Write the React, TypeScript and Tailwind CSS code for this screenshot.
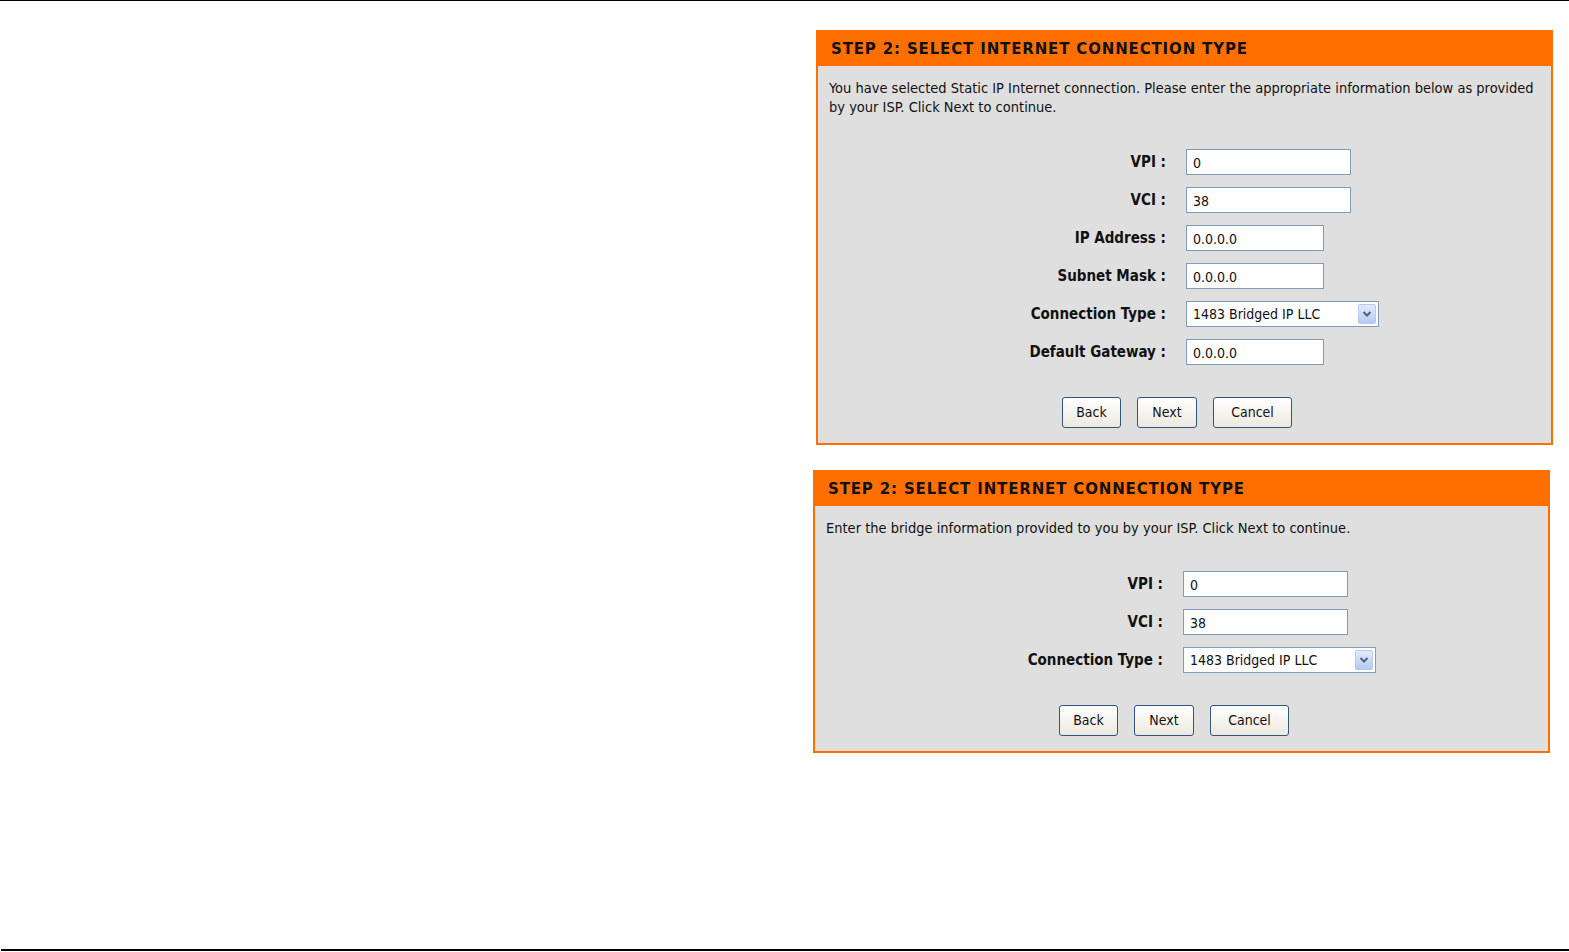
import React from "react";

type Field = { label: string; value: string; kind: "wide" | "narrow" | "select" };

const staticFields: Field[] = [
  { label: "VPI :", value: "0", kind: "wide" },
  { label: "VCI :", value: "38", kind: "wide" },
  { label: "IP Address :", value: "0.0.0.0", kind: "narrow" },
  { label: "Subnet Mask :", value: "0.0.0.0", kind: "narrow" },
  { label: "Connection Type :", value: "1483 Bridged IP LLC", kind: "select" },
  { label: "Default Gateway :", value: "0.0.0.0", kind: "narrow" },
];

const bridgeFields: Field[] = [
  { label: "VPI :", value: "0", kind: "wide" },
  { label: "VCI :", value: "38", kind: "wide" },
  { label: "Connection Type :", value: "1483 Bridged IP LLC", kind: "select" },
];

const bodyFont = { fontFamily: '"DejaVu Sans Condensed", "DejaVu Sans", Tahoma, sans-serif' };

const FieldInput: React.FC<{ field: Field }> = ({ field }) => {
  if (field.kind === "select") {
    return (
      <div className="flex h-[26px] w-[193px] items-center justify-between border border-[#7f9db9] bg-white pl-[6px] pr-[2px] text-[14px] text-[#111]">
        <span>{field.value}</span>
        <div className="flex h-[20px] w-[18px] items-center justify-center rounded-[2px] border border-[#b8c9ee] bg-gradient-to-b from-[#e2ebfd] to-[#b7c9f3]">
          <svg width="10" height="8" viewBox="0 0 10 8">
            <path d="M1.5 2 L5 5.5 L8.5 2" fill="none" stroke="#4d6185" strokeWidth="2" />
          </svg>
        </div>
      </div>
    );
  }
  return (
    <div
      className={`flex h-[26px] items-center border border-[#7f9db9] bg-white pl-[6px] pt-[2px] text-[14px] text-[#111] ${
        field.kind === "wide" ? "w-[165px]" : "w-[138px]"
      }`}
    >
      {field.value}
    </div>
  );
};

const Btn: React.FC<{ label: string; w: string }> = ({ label, w }) => (
  <button
    type="button"
    className={`${w} h-[31px] rounded-[3px] border border-[#2f5680] bg-gradient-to-b from-[#ffffff] to-[#ece9de] text-[14px] text-[#111]`}
    style={bodyFont}
  >
    {label}
  </button>
);

const Panel: React.FC<{
  offset: string;
  text: React.ReactNode;
  fields: Field[];
  formTop: string;
  btnTop: string;
}> = ({ offset, text, fields, formTop, btnTop }) => (
  <div className={`${offset} w-[737px] border-2 border-[#ff6f00] bg-[#dfdfdf]`}>
    <div
      className="flex h-[34px] items-center bg-[#ff6f00] pl-[13px] text-[15px] font-bold tracking-[0.85px] text-[#111]"
      style={{ fontFamily: '"DejaVu Sans", Verdana, sans-serif' }}
    >
      STEP 2: SELECT INTERNET CONNECTION TYPE
    </div>
    <div className="px-[11px] pt-[13px] pb-[15px]" style={bodyFont}>
      <p className="text-[14.5px] leading-[19px] text-[#111]">{text}</p>
      <div className={`${formTop} grid grid-cols-[337px_1fr] gap-x-[20px] gap-y-[12px]`}>
        {fields.map((f) => (
          <React.Fragment key={f.label}>
            <div className="flex h-[26px] items-center justify-end text-[15px] font-bold text-[#111]">
              {f.label}
            </div>
            <FieldInput field={f} />
          </React.Fragment>
        ))}
      </div>
      <div className={`${btnTop} flex gap-[16px] pl-[233px]`}>
        <Btn label="Back" w="w-[59px]" />
        <Btn label="Next" w="w-[60px]" />
        <Btn label="Cancel" w="w-[79px]" />
      </div>
    </div>
  </div>
);

export default function App() {
  return (
    <div className="flex h-[952px] w-[1569px] flex-col overflow-hidden border-t border-black bg-white">
      <div className="flex flex-1 flex-col pt-[29px]">
        <Panel
          offset="ml-[816px]"
          text={
            <>
              You have selected Static IP Internet connection. Please enter the appropriate information below as provided
              <br />
              by your ISP. Click Next to continue.
            </>
          }
          fields={staticFields}
          formTop="mt-[32px]"
          btnTop="mt-[32px]"
        />
        <div className="h-[25px]" />
        <Panel
          offset="ml-[813px]"
          text="Enter the bridge information provided to you by your ISP. Click Next to continue."
          fields={bridgeFields}
          formTop="mt-[33px]"
          btnTop="mt-[32px]"
        />
      </div>
      <div className="mb-[1px] ml-[1px] h-[2px] bg-black" />
    </div>
  );
}
